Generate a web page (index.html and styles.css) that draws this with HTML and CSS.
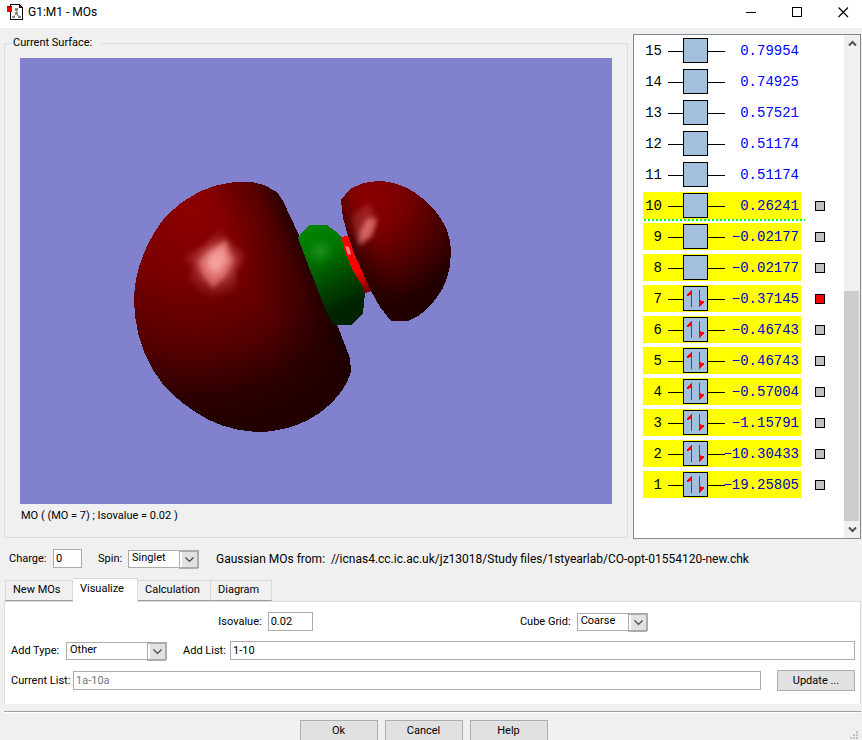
FILE: index.html
```html
<!DOCTYPE html>
<html lang="en">
<head>
<meta charset="utf-8">
<title>G1:M1 - MOs</title>
<link rel="stylesheet" href="styles.css">
</head>
<body>
<div class="window">
  <header class="titlebar">
    <svg class="app-icon" width="16" height="16" viewBox="0 0 16 16" shape-rendering="crispEdges">
      <path d="M3.500 .5H12.500L15.500 3.500V15.500H3.500Z" fill="#fff" stroke="#000"/>
      <path d="M12 0h1v1h1v1h1v1h1v1h-4z" fill="#000"/><path d="M13 2h1v1h-1z" fill="#f00"/>
      <path d="M9.500 5V10L6 13M9.500 10L13 13" fill="none" stroke="#999"/>
      <path d="M8 4h3v3h-3zM8 8h3v2h-3zM5 12h3v2h-3zM11 12h3v2h-3z" fill="#888"/>
      <path d="M0 3h5v5h-5z" fill="#f00"/><path d="M0 2.500H5" stroke="#800000"/>
    </svg>
    <h1 class="title">G1:M1 - MOs</h1>
    <div class="window-buttons">
      <button type="button" aria-label="Minimize"><svg width="11" height="11" viewBox="0 0 11 11" shape-rendering="crispEdges"><path d="M0 5.500H10" stroke="#000"/></svg></button>
      <button type="button" aria-label="Maximize"><svg width="11" height="11" viewBox="0 0 11 11" shape-rendering="crispEdges"><path d="M.5 .5H9.500V9.500H.5Z" fill="none" stroke="#000"/></svg></button>
      <button type="button" aria-label="Close"><svg width="11" height="11" viewBox="0 0 11 11"><path d="M.5 .5L10 10M10 .5L.5 10" stroke="#000" stroke-width="1.200"/></svg></button>
    </div>
  </header>

  <main class="workspace">
    <fieldset class="surface">
      <legend>Current Surface:</legend>
      <svg class="scene" viewBox="20 58 592 446" preserveAspectRatio="xMidYMid slice" role="img" aria-label="Orbital surface">
        <defs>
          <radialGradient id="big" gradientUnits="userSpaceOnUse" cx="192" cy="212" r="215">
            <stop offset="0" stop-color="#8c0000"/><stop offset=".3" stop-color="#7c0000"/><stop offset=".65" stop-color="#540000"/><stop offset=".85" stop-color="#2e0000"/><stop offset="1" stop-color="#220000"/>
          </radialGradient>
          <linearGradient id="bigEdge" gradientUnits="userSpaceOnUse" x1="245" y1="271" x2="309" y2="244">
            <stop offset="0" stop-color="#200000" stop-opacity="0"/><stop offset=".6" stop-color="#200000" stop-opacity=".4"/><stop offset="1" stop-color="#180000" stop-opacity=".95"/>
          </linearGradient>
          <radialGradient id="small" gradientUnits="userSpaceOnUse" cx="368" cy="200" r="112">
            <stop offset="0" stop-color="#8c0000"/><stop offset=".3" stop-color="#7a0000"/><stop offset=".7" stop-color="#460000"/><stop offset=".95" stop-color="#220000"/>
          </radialGradient>
          <linearGradient id="smallEdge" gradientUnits="userSpaceOnUse" x1="356" y1="262" x2="380" y2="250">
            <stop offset="0" stop-color="#200000" stop-opacity=".6"/><stop offset="1" stop-color="#200000" stop-opacity="0"/>
          </linearGradient>
          <linearGradient id="green" gradientUnits="userSpaceOnUse" x1="312" y1="228" x2="350" y2="304">
            <stop offset="0" stop-color="#008400"/><stop offset=".35" stop-color="#007200"/><stop offset=".7" stop-color="#004600"/><stop offset="1" stop-color="#002400"/>
          </linearGradient>
          <radialGradient id="greenGlow" gradientUnits="userSpaceOnUse" cx="320" cy="251" r="15">
            <stop offset="0" stop-color="#30a030" stop-opacity=".6"/><stop offset="1" stop-color="#209020" stop-opacity="0"/>
          </radialGradient>
          <linearGradient id="ring" gradientUnits="userSpaceOnUse" x1="344" y1="237" x2="368" y2="293">
            <stop offset="0" stop-color="#f00"/><stop offset=".6" stop-color="#f00"/><stop offset=".85" stop-color="#a00000"/><stop offset="1" stop-color="#700000"/>
          </linearGradient>
          <radialGradient id="shine" gradientUnits="userSpaceOnUse" cx="216" cy="263" r="36">
            <stop offset="0" stop-color="#ffb8b8" stop-opacity=".8"/><stop offset=".5" stop-color="#d86060" stop-opacity=".5"/><stop offset="1" stop-color="#a03030" stop-opacity=".05"/>
          </radialGradient>
          <filter id="soft" x="-30%" y="-30%" width="160%" height="160%"><feGaussianBlur stdDeviation="2.500"/></filter>
        </defs>
        <rect x="-1000" y="-1000" width="3000" height="3000" fill="#8181cd"/>
        <g shape-rendering="crispEdges">
          <path d="M134 300C134 270 148 237 167 215C187 195 210 184 235 182L252 182L264 185L277 192L283 201L298 233L332 318L338 327L350 358L351 372C347 386 338 397 327 407C310 422 285 432 257 432C232 431 212 423 197 413C180 402 165 390 153 370C140 349 134 322 134 300Z" fill="url(#big)"/>
          <path d="M134 300C134 270 148 237 167 215C187 195 210 184 235 182L252 182L264 185L277 192L283 201L298 233L332 318L338 327L350 358L351 372C347 386 338 397 327 407C310 422 285 432 257 432C232 431 212 423 197 413C180 402 165 390 153 370C140 349 134 322 134 300Z" fill="url(#bigEdge)"/>
        </g>
        <path d="M221 226L228 240L247 255L237 270L236 290L213 299L198 292L188 277L194 267L181 257L204 246Z" fill="url(#shine)" filter="url(#soft)"/>
        <path d="M226 239L229 250L234 260L225 276L213 288L204 277L198 262L209 251Z" fill="#ff9898" fill-opacity=".5" filter="url(#soft)"/>
        <path d="M224 244L227 260L215 275L207 264L211 254Z" fill="#ffb4b4" fill-opacity=".5" filter="url(#soft)"/>
        <g shape-rendering="crispEdges">
          <path d="M340 238L348 235L374 290L366 293L355 283Z" fill="url(#ring)"/>
          <path d="M298 238L302 232L309 225L327 225L335 231L341 236L345 252L353 271L361 284L365 293L363 313L352 325L333 325L327 313L310 270Z" fill="url(#green)"/>
          <path d="M341 200L350 189L363 183L377 181C401 181 418 193 432 207C445 221 451 237 451 250C451 270 446 286 437 297C431 306 420 317 408 321L391 321L380 307L371 291L362 271L354 253L348 236L343 218Z" fill="url(#small)"/>
          <path d="M341 200L350 189L363 183L377 181C401 181 418 193 432 207C445 221 451 237 451 250C451 270 446 286 437 297C431 306 420 317 408 321L391 321L380 307L371 291L362 271L354 253L348 236L343 218Z" fill="url(#smallEdge)"/>
        </g>
        <circle cx="320" cy="251" r="15" fill="url(#greenGlow)"/>
        <path d="M345 246L349 247L351 254L348 255Z" fill="#ffa0a0" fill-opacity=".8"/>
        <path d="M368 204L377 219L373 236L360 247L354 232L352 216Z" fill="#c05050" fill-opacity=".4" filter="url(#soft)"/>
        <path d="M367 218L377 219L371 236L359 244L360 231Z" fill="#ff9090" fill-opacity=".6" filter="url(#soft)"/>
      </svg>
      <p class="caption">MO ( (MO = 7) ; Isovalue = 0.02 )</p>
    </fieldset>

    <section class="levels" aria-label="Orbital energies">
      <ol class="level-list" id="levels"></ol>
      <div class="scrollbar">
        <button type="button" aria-label="Scroll up"><svg width="9" height="7" viewBox="0 0 9 7"><path d="M1 5.500L4.500 2L8 5.500" fill="none" stroke="#505050" stroke-width="2"/></svg></button>
        <div class="track"><div class="thumb"></div></div>
        <button type="button" aria-label="Scroll down"><svg width="9" height="7" viewBox="0 0 9 7"><path d="M1 1.500L4.500 5L8 1.500" fill="none" stroke="#505050" stroke-width="2"/></svg></button>
      </div>
    </section>
  </main>

  <section class="job">
    <label class="label-charge" for="charge">Charge:</label>
    <input id="charge" class="field charge" value="0">
    <label class="label-spin" for="spin">Spin:</label>
    <span class="select spin"><select id="spin"><option>Singlet</option></select><svg width="9" height="6" viewBox="0 0 9 6"><path d="M.5 .5L4.500 4.500L8.500 .5" fill="none" stroke="#444" stroke-width="1.200"/></svg></span>
    <p class="source">Gaussian MOs from: &nbsp;//icnas4.cc.ic.ac.uk/jz13018/Study files/1styearlab/CO-opt-01554120-new.chk</p>
  </section>

  <nav class="tabs" role="tablist">
    <button type="button" role="tab" class="tab tab-new">New MOs</button>
    <button type="button" role="tab" class="tab tab-vis active" aria-selected="true">Visualize</button>
    <button type="button" role="tab" class="tab tab-calc">Calculation</button>
    <button type="button" role="tab" class="tab tab-dia">Diagram</button>
  </nav>
  <section class="panel">
    <div class="row row-grid">
      <div class="pair"><label for="iso">Isovalue:</label><input id="iso" class="field iso" value="0.02"></div>
      <div class="pair"><label for="cube">Cube Grid:</label><span class="select cube"><select id="cube"><option>Coarse</option></select><svg width="9" height="6" viewBox="0 0 9 6"><path d="M.5 .5L4.500 4.500L8.500 .5" fill="none" stroke="#444" stroke-width="1.200"/></svg></span></div>
    </div>
    <div class="row">
      <label class="label-type" for="type">Add Type:</label>
      <span class="select type"><select id="type"><option>Other</option></select><svg width="9" height="6" viewBox="0 0 9 6"><path d="M.5 .5L4.500 4.500L8.500 .5" fill="none" stroke="#444" stroke-width="1.200"/></svg></span>
      <label class="label-add" for="add">Add List:</label>
      <input id="add" class="field grow" value="1-10">
    </div>
    <div class="row">
      <label class="label-current" for="current">Current List:</label>
      <input id="current" class="field grow" value="1a-10a" disabled>
      <button type="button" class="btn update">Update ...</button>
    </div>
  </section>

  <footer class="actions">
    <button type="button" class="btn">Ok</button>
    <button type="button" class="btn">Cancel</button>
    <button type="button" class="btn">Help</button>
    <svg class="grip" width="9" height="9" viewBox="0 0 9 9" shape-rendering="crispEdges"><path d="M6 0h2v2h-2zM3 3h2v2h-2zM6 3h2v2h-2zM0 6h2v2h-2zM3 6h2v2h-2zM6 6h2v2h-2z" fill="#bfbfbf"/></svg>
  </footer>
</div>
<script src="levels.js"></script>
</body>
</html>
```
FILE: styles.css
```css
* { box-sizing: border-box; }
body {
  margin: 0;
  background: #f0f0f0;
  color: #000;
  font: 11px/16px Roboto, "Liberation Sans", sans-serif;
}
button, input, select { font: inherit; color: inherit; }
p, h1, ol { margin: 0; padding: 0; }
label { white-space: nowrap; }

.window { display: flex; flex-direction: column; height: 100vh; overflow: hidden; }

.titlebar { display: flex; align-items: center; height: 28px; flex: none; padding-left: 7px; padding-bottom: 4px; background: #fff; }
.title { margin-left: 5px; font-size: 12px; font-weight: 400; }
.window-buttons { display: flex; margin-left: auto; }
.window-buttons button { display: flex; justify-content: center; align-items: center; width: 46px; height: 24px; padding: 0; border: 0; background: none; }
.window-buttons button:last-child { width: 42px; padding-left: 4px; }

.workspace { display: flex; flex: 1; min-height: 0; padding: 6px 1px 0 4px; }
.surface {
  display: flex; flex-direction: column; flex: 1; min-width: 0;
  margin: 1px 5px 1px 0; padding: 7px 15px 13px; border: 1px solid #dcdcdc;
}
.surface legend { margin-left: -8px; padding: 0 9px 0 1px; line-height: 16px; }
.scene { display: block; width: 100%; flex: 1; min-height: 0; }
.caption { padding: 4px 1px 0; line-height: 16px; }

.levels { display: flex; width: 228px; flex: none; border: 1px solid #828790; background: #fff; overflow: hidden; }
.level-list { flex: 1; list-style: none; padding: 2px 0 0 9px; font: 14px/16px "Liberation Mono", monospace; }
.level { display: flex; align-items: center; height: 27px; margin-bottom: 4px; }
.bar { display: flex; align-items: center; width: 158px; height: 27px; padding: 0 2px; }
.picked .bar { background: #ff0; }
.number, .energy { padding-top: 1px; }
.number { width: 17px; text-align: right; }
.orbital { flex: none; width: 57px; height: 25px; margin-left: 6px; }
.energy { flex: 1; margin-left: -8px; text-align: right; color: #00f; }
.picked .energy { color: #0000c8; }
.mark { width: 10px; height: 10px; margin: 0 0 0 14px; border: 1px solid #000; background: #c0c0c0; appearance: none; }
.mark:checked { background: #f00; }
.homo-gap { height: 2px; margin: -4px 0 2px 1px; width: 161px; background: repeating-linear-gradient(90deg, #0f0 0 2px, #fff 2px 4px); }

.scrollbar { display: flex; flex-direction: column; width: 16px; background: #f0f0f0; }
.scrollbar button { display: flex; justify-content: center; align-items: center; height: 17px; padding: 0; border: 0; background: none; }
.track { display: flex; flex: 1; align-items: flex-end; }
.thumb { width: 15px; height: 49%; background: #cdcdcd; }

.field { height: 19px; min-width: 0; padding: 2px; border: 1px solid #ababab; border-radius: 0; background: #fff; }
.field:disabled { color: #787878; }
.select { position: relative; display: inline-flex; height: 18px; border: 1px solid #ababab; background: #fff; }
.select select { width: 100%; padding: 0 18px 2px 3px; border: 0; border-radius: 0; outline: 0; background: linear-gradient(#e1e1e1, #e1e1e1) right / 16px 100% no-repeat; appearance: none; line-height: 14px; }
.select svg { position: absolute; right: 4px; bottom: 4px; pointer-events: none; }
.select::after { content: ""; position: absolute; top: 0; right: 0; width: 17px; height: 100%; border: 1px solid #adadad; pointer-events: none; }

.job { display: flex; align-items: center; height: 39px; flex: none; padding-left: 9px; }
.label-charge { width: 44px; }
.charge { width: 29px; margin-right: 16px; }
.label-spin { width: 30px; }
.spin { width: 71px; margin-right: 17px; }
.source { white-space: nowrap; font-size: 12px; }

.tabs { display: flex; align-items: flex-end; height: 23px; flex: none; margin-left: 5px; position: relative; z-index: 1; }
.tab { height: 21px; padding: 0 0 2px 7px; border: 1px solid #d9d9d9; border-bottom-color: #999; border-left: 0; background: #f0f0f0; text-align: left; }
.tab-new { width: 68px; border-left: 1px solid #d9d9d9; }
.tab-vis { width: 65px; }
.tab-calc { width: 73px; }
.tab-dia { width: 61px; }
.tab.active { height: 24px; margin-bottom: -1px; padding-bottom: 3px; border-bottom: 0; background: #fff; }

.panel { flex: none; margin: 0 1px 0 4px; padding: 10px 5px 13px 6px; border: 1px solid #dcdcdc; border-bottom: 0; background: #fff; }
.row { display: flex; align-items: center; height: 19px; margin-bottom: 10px; }
.row:last-child { height: 21px; margin-bottom: 0; }
.row-grid { justify-content: space-evenly; }
.pair { display: flex; align-items: center; }
.iso { width: 45px; margin-left: 6px; }
.cube { width: 71px; margin-left: 6px; }
.label-type { width: 55px; }
.type { width: 101px; }
.label-add { width: 47px; margin-left: 16px; }
.label-current { width: 62px; }
.grow { flex: 1; }
.btn { width: 78px; height: 21px; padding: 0; border: 1px solid #adadad; background: #e1e1e1; flex: none; }
.update { margin-left: 16px; }

.actions { position: relative; display: flex; justify-content: center; gap: 7px; height: 29px; flex: none; margin: 7px 1px 0 4px; padding: 8px 18px 0 0; border-top: 1px solid #a0a0a0; box-shadow: inset 0 1px #fff; }
.grip { position: absolute; right: 2px; bottom: 0; }
```
FILE: levels.js
```js
const energies = [
  [15, "0.79954"], [14, "0.74925"], [13, "0.57521"], [12, "0.51174"], [11, "0.51174"],
  [10, "0.26241"], [9, "−0.02177"], [8, "−0.02177"], [7, "−0.37145"], [6, "−0.46743"],
  [5, "−0.46743"], [4, "−0.57004"], [3, "−1.15791"], [2, "−10.30433"], [1, "−19.25805"]
];

const electrons = '<path d="M23.500 4V21M31.500 4V21" stroke="#f00"/><path d="M24 4V9H21V10H19V9L23 4ZM31 20V14H33V15H36V16L32 20Z" fill="#f00"/>';

document.getElementById("levels").innerHTML = energies.map(([n, e]) => `
  <li class="level${n <= 10 ? " picked" : ""}">
    <div class="bar">
      <span class="number">${n}</span>
      <svg class="orbital" viewBox="0 0 57 25" shape-rendering="crispEdges">
        <path d="M0 13.500H15M40 13.500H57" stroke="#000"/>
        <rect x="15.500" y=".5" width="24" height="24" fill="#a2bfde" stroke="#000"/>
        ${n <= 7 ? electrons : ""}
      </svg>
      <span class="energy">${e}</span>
    </div>
    ${n <= 10 ? `<input type="checkbox" class="mark" aria-label="Orbital ${n}"${n === 7 ? " checked" : ""}>` : ""}
  </li>${n === 10 ? '<li class="homo-gap" role="presentation"></li>' : ""}`).join("");
```
